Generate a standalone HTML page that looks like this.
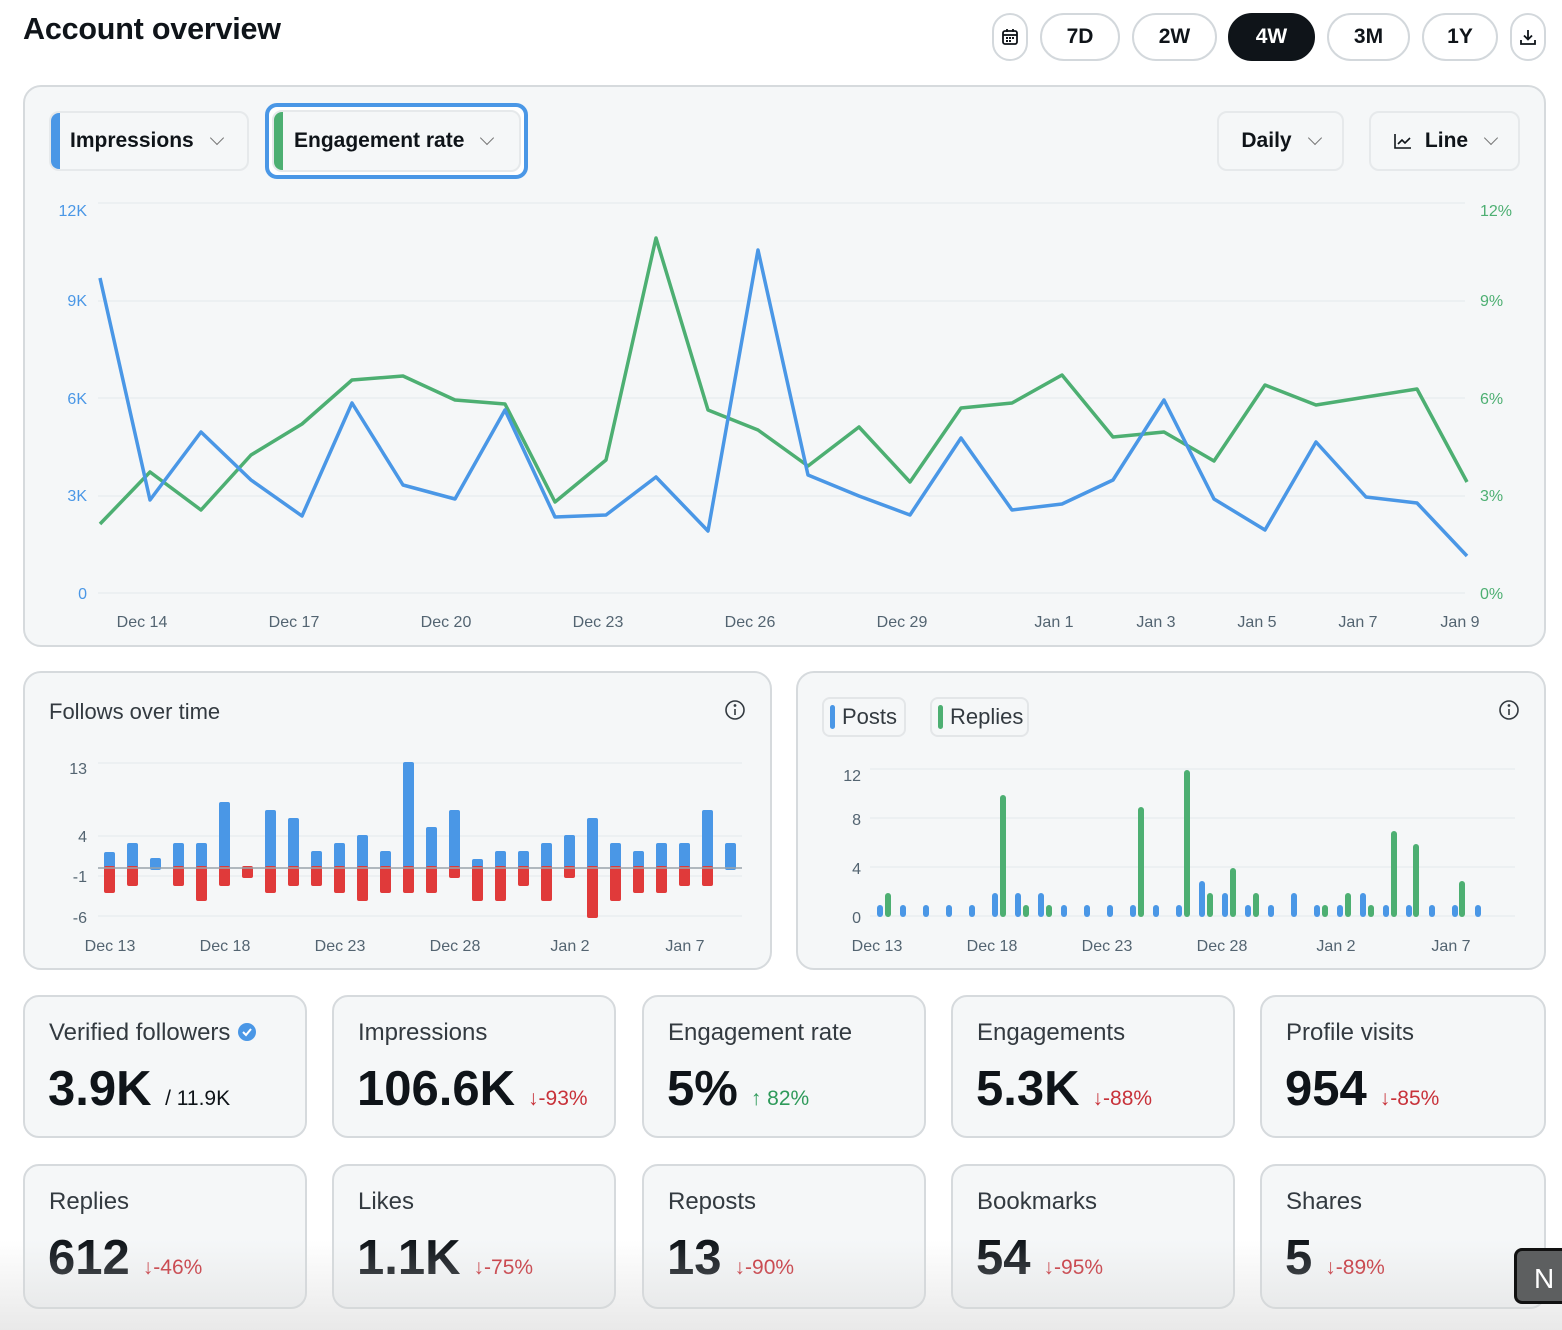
<!DOCTYPE html>
<html><head><meta charset="utf-8"><style>
*{box-sizing:border-box;margin:0;padding:0}
body{width:1562px;height:1330px;overflow:hidden;background:#fff;font-family:"Liberation Sans",sans-serif;color:#0f1419;position:relative}
.abs{position:absolute}
h1{position:absolute;left:23px;top:12px;font-size:30.5px;font-weight:bold;letter-spacing:-0.2px}
.pill{position:absolute;top:13px;height:48px;border:2px solid #d3d8dc;border-radius:24px;font-size:21px;font-weight:bold;display:flex;align-items:center;justify-content:center;background:#fff}
.pill.on{background:#0f1419;color:#fff;border-color:#0f1419}
.card{position:absolute;background:#f5f7f8;border:2px solid #d6dadd;border-radius:18px}
.sel{position:absolute;background:#f5f7f8;border:2px solid #e6e9eb;border-radius:10px;font-size:21px;font-weight:bold;display:flex;align-items:center;overflow:hidden}
.chev{display:inline-block;width:10px;height:10px;border-right:1.6px solid #777;border-bottom:1.6px solid #777;transform:rotate(45deg);margin-left:18px;margin-top:-6px}
.stat{position:absolute;width:284px;height:143px;background:#f5f7f8;border:2px solid #d6dadd;border-radius:16px}
.stat .t{position:absolute;left:24px;top:22px;font-size:24px;color:#333a40}
.stat .v{position:absolute;left:23px;top:64px;font-size:49px;font-weight:bold;letter-spacing:0}
.stat .d{font-size:21px;font-weight:normal;color:#c8323a;letter-spacing:0;margin-left:13px}
.stat .g{color:#2e9a5a}
</style></head><body>
<h1>Account overview</h1>
<div class="pill" style="left:992px;width:36px;border-radius:18px"><svg width="18" height="18" viewBox="0 0 18 18"><rect x="2" y="3" width="14" height="13" rx="2" fill="none" stroke="#0f1419" stroke-width="1.8"/><line x1="2" y1="7" x2="16" y2="7" stroke="#0f1419" stroke-width="1.8"/><line x1="6" y1="1" x2="6" y2="4" stroke="#0f1419" stroke-width="1.8"/><line x1="12" y1="1" x2="12" y2="4" stroke="#0f1419" stroke-width="1.8"/><rect x="5" y="9" width="2" height="2" fill="#0f1419"/><rect x="8" y="9" width="2" height="2" fill="#0f1419"/><rect x="11" y="9" width="2" height="2" fill="#0f1419"/><rect x="5" y="12" width="2" height="2" fill="#0f1419"/><rect x="8" y="12" width="2" height="2" fill="#0f1419"/></svg></div>
<div class="pill" style="left:1040px;width:80px">7D</div>
<div class="pill" style="left:1132px;width:85px">2W</div>
<div class="pill on" style="left:1228px;width:87px">4W</div>
<div class="pill" style="left:1327px;width:83px">3M</div>
<div class="pill" style="left:1422px;width:76px">1Y</div>
<div class="pill" style="left:1510px;width:36px;border-radius:18px"><svg width="18" height="18" viewBox="0 0 18 18" fill="none" stroke="#0f1419" stroke-width="1.8"><path d="M9 2v9M5 7.5l4 4 4-4M2 12v4h14v-4"/></svg></div>

<div class="card" style="left:23px;top:85px;width:1523px;height:562px"></div>
<div class="sel" style="left:49px;top:111px;width:200px;height:60px"><span style="width:9px;height:100%;background:#4a97e6;border-radius:4px 0 0 4px"></span><span style="margin-left:10px">Impressions</span><span class="chev"></span></div>
<div class="abs" style="left:265px;top:103px;width:263px;height:76px;border:4px solid #4a97e6;border-radius:12px;background:#fff"></div>
<div class="sel" style="left:272px;top:110px;width:249px;height:62px"><span style="width:9px;height:100%;background:#4daf72"></span><span style="margin-left:11px">Engagement rate</span><span class="chev"></span></div>
<div class="sel" style="left:1217px;top:111px;width:127px;height:60px;justify-content:center">Daily<span class="chev"></span></div>
<div class="sel" style="left:1369px;top:111px;width:151px;height:60px;justify-content:center"><svg width="20" height="18" viewBox="0 0 20 18" fill="none" stroke="#0f1419" stroke-width="1.6" style="margin-right:12px"><path d="M2 2v14h16M5 12l4-4 3 3 5-5"/></svg>Line<span class="chev"></span></div>

<svg class="abs" style="left:0;top:0" width="1562" height="1330">
<g stroke="#e8ebed" stroke-width="1.2">
<line x1="98" y1="203" x2="1465" y2="203"/><line x1="98" y1="301" x2="1465" y2="301"/><line x1="98" y1="398" x2="1465" y2="398"/><line x1="98" y1="496" x2="1465" y2="496"/><line x1="98" y1="593" x2="1465" y2="593"/>
</g>
<g font-size="16" fill="#4a97e6" text-anchor="end"><text x="87" y="216">12K</text><text x="87" y="306">9K</text><text x="87" y="404">6K</text><text x="87" y="501">3K</text><text x="87" y="599">0</text></g>
<g font-size="16" fill="#4daf72"><text x="1480" y="216">12%</text><text x="1480" y="306">9%</text><text x="1480" y="404">6%</text><text x="1480" y="501">3%</text><text x="1480" y="599">0%</text></g>
<g font-size="16" fill="#536471" text-anchor="middle"><text x="142" y="627">Dec 14</text><text x="294" y="627">Dec 17</text><text x="446" y="627">Dec 20</text><text x="598" y="627">Dec 23</text><text x="750" y="627">Dec 26</text><text x="902" y="627">Dec 29</text><text x="1054" y="627">Jan 1</text><text x="1156" y="627">Jan 3</text><text x="1257" y="627">Jan 5</text><text x="1358" y="627">Jan 7</text><text x="1460" y="627">Jan 9</text></g>
<polyline fill="none" stroke="#4daf72" stroke-width="3.5" stroke-linejoin="round" points="100,524 150,472 201,510 251,455 302,424 352,380 403,376 455,400 505,404 555,502 606,460 656,238 708,410 758,430 808,466 859,427 910,482 961,408 1012,403 1062,375 1113,437 1164,432 1214,461 1265,385 1316,405 1366,397 1417,389 1467,482"/>
<polyline fill="none" stroke="#4a97e6" stroke-width="3.5" stroke-linejoin="round" points="100,278 150,500 201,432 251,480 302,516 352,403 403,485 455,499 505,410 555,517 606,515 656,477 708,531 758,250 808,475 859,496 910,515 961,438 1012,510 1062,504 1113,480 1164,400 1214,499 1265,530 1316,442 1366,497 1417,503 1467,556"/>
</svg>

<div class="card" style="left:23px;top:671px;width:749px;height:299px"></div>
<div class="abs" style="left:49px;top:699px;font-size:22px;color:#333a40">Follows over time</div>
<svg class="abs" style="left:724px;top:699px" width="22" height="22" viewBox="0 0 22 22" fill="none" stroke="#333a40" stroke-width="1.6"><circle cx="11" cy="11" r="9"/><line x1="11" y1="10" x2="11" y2="16"/><circle cx="11" cy="6.5" r="0.6" fill="#333a40"/></svg>
<div class="card" style="left:796px;top:671px;width:750px;height:299px"></div>
<div class="abs" style="left:822px;top:697px;width:84px;height:40px;border:2px solid #e3e6e8;border-radius:8px;font-size:22px;color:#333a40;display:flex;align-items:center"><span style="width:5px;height:24px;background:#4a97e6;border-radius:3px;margin:0 7px 0 6px"></span>Posts</div>
<div class="abs" style="left:930px;top:697px;width:99px;height:40px;border:2px solid #e3e6e8;border-radius:8px;font-size:22px;color:#333a40;display:flex;align-items:center"><span style="width:5px;height:24px;background:#4daf72;border-radius:3px;margin:0 7px 0 6px"></span>Replies</div>
<svg class="abs" style="left:1498px;top:699px" width="22" height="22" viewBox="0 0 22 22" fill="none" stroke="#333a40" stroke-width="1.6"><circle cx="11" cy="11" r="9"/><line x1="11" y1="10" x2="11" y2="16"/><circle cx="11" cy="6.5" r="0.6" fill="#333a40"/></svg>

<svg class="abs" style="left:0;top:0" width="1562" height="1330">
<g stroke="#e8ebed" stroke-width="1.2"><line x1="98" y1="763" x2="742" y2="763"/><line x1="98" y1="836" x2="742" y2="836"/><line x1="98" y1="876" x2="742" y2="876"/><line x1="98" y1="916" x2="742" y2="916"/></g>
<g font-size="16" fill="#536471" text-anchor="end"><text x="87" y="774">13</text><text x="87" y="842">4</text><text x="87" y="882">-1</text><text x="87" y="923">-6</text></g>
<g font-size="16" fill="#536471" text-anchor="middle"><text x="110" y="951">Dec 13</text><text x="225" y="951">Dec 18</text><text x="340" y="951">Dec 23</text><text x="455" y="951">Dec 28</text><text x="570" y="951">Jan 2</text><text x="685" y="951">Jan 7</text></g>
<g fill="#4a97e6">
<rect x="104" y="852" width="11" height="18" rx="2"/><rect x="127" y="843" width="11" height="27" rx="2"/><rect x="150" y="858" width="11" height="12" rx="2"/><rect x="173" y="843" width="11" height="27" rx="2"/><rect x="196" y="843" width="11" height="27" rx="2"/><rect x="219" y="802" width="11" height="68" rx="2"/><rect x="265" y="810" width="11" height="60" rx="2"/><rect x="288" y="818" width="11" height="52" rx="2"/><rect x="311" y="851" width="11" height="19" rx="2"/><rect x="334" y="843" width="11" height="27" rx="2"/><rect x="357" y="835" width="11" height="35" rx="2"/><rect x="380" y="851" width="11" height="19" rx="2"/><rect x="403" y="762" width="11" height="108" rx="2"/><rect x="426" y="827" width="11" height="43" rx="2"/><rect x="449" y="810" width="11" height="60" rx="2"/><rect x="472" y="859" width="11" height="11" rx="2"/><rect x="495" y="851" width="11" height="19" rx="2"/><rect x="518" y="851" width="11" height="19" rx="2"/><rect x="541" y="843" width="11" height="27" rx="2"/><rect x="564" y="835" width="11" height="35" rx="2"/><rect x="587" y="818" width="11" height="52" rx="2"/><rect x="610" y="843" width="11" height="27" rx="2"/><rect x="633" y="851" width="11" height="19" rx="2"/><rect x="656" y="843" width="11" height="27" rx="2"/><rect x="679" y="843" width="11" height="27" rx="2"/><rect x="702" y="810" width="11" height="60" rx="2"/><rect x="725" y="843" width="11" height="27" rx="2"/>
</g>
<g fill="#e03a3a">
<rect x="104" y="866" width="11" height="27" rx="2"/><rect x="127" y="866" width="11" height="20" rx="2"/><rect x="173" y="866" width="11" height="20" rx="2"/><rect x="196" y="866" width="11" height="35" rx="2"/><rect x="219" y="866" width="11" height="20" rx="2"/><rect x="242" y="866" width="11" height="12" rx="2"/><rect x="265" y="866" width="11" height="27" rx="2"/><rect x="288" y="866" width="11" height="20" rx="2"/><rect x="311" y="866" width="11" height="20" rx="2"/><rect x="334" y="866" width="11" height="27" rx="2"/><rect x="357" y="866" width="11" height="35" rx="2"/><rect x="380" y="866" width="11" height="27" rx="2"/><rect x="403" y="866" width="11" height="27" rx="2"/><rect x="426" y="866" width="11" height="27" rx="2"/><rect x="449" y="866" width="11" height="12" rx="2"/><rect x="472" y="866" width="11" height="35" rx="2"/><rect x="495" y="866" width="11" height="35" rx="2"/><rect x="518" y="866" width="11" height="20" rx="2"/><rect x="541" y="866" width="11" height="35" rx="2"/><rect x="564" y="866" width="11" height="12" rx="2"/><rect x="587" y="866" width="11" height="52" rx="2"/><rect x="610" y="866" width="11" height="35" rx="2"/><rect x="633" y="866" width="11" height="27" rx="2"/><rect x="656" y="866" width="11" height="27" rx="2"/><rect x="679" y="866" width="11" height="20" rx="2"/><rect x="702" y="866" width="11" height="20" rx="2"/>
</g>
<line x1="98" y1="868" x2="742" y2="868" stroke="#9aa3aa" stroke-width="1.5"/>

<g stroke="#e8ebed" stroke-width="1.2"><line x1="870" y1="769" x2="1515" y2="769"/><line x1="870" y1="818" x2="1515" y2="818"/><line x1="870" y1="867" x2="1515" y2="867"/><line x1="870" y1="916" x2="1515" y2="916"/></g>
<g font-size="16" fill="#536471" text-anchor="end"><text x="861" y="781">12</text><text x="861" y="825">8</text><text x="861" y="874">4</text><text x="861" y="923">0</text></g>
<g font-size="16" fill="#536471" text-anchor="middle"><text x="877" y="951">Dec 13</text><text x="992" y="951">Dec 18</text><text x="1107" y="951">Dec 23</text><text x="1222" y="951">Dec 28</text><text x="1336" y="951">Jan 2</text><text x="1451" y="951">Jan 7</text></g>
<g fill="#4a97e6">
<rect x="877" y="905" width="6" height="12" rx="3"/><rect x="900" y="905" width="6" height="12" rx="3"/><rect x="923" y="905" width="6" height="12" rx="3"/><rect x="946" y="905" width="6" height="12" rx="3"/><rect x="969" y="905" width="6" height="12" rx="3"/><rect x="992" y="893" width="6" height="24" rx="3"/><rect x="1015" y="893" width="6" height="24" rx="3"/><rect x="1038" y="893" width="6" height="24" rx="3"/><rect x="1061" y="905" width="6" height="12" rx="3"/><rect x="1084" y="905" width="6" height="12" rx="3"/><rect x="1107" y="905" width="6" height="12" rx="3"/><rect x="1130" y="905" width="6" height="12" rx="3"/><rect x="1153" y="905" width="6" height="12" rx="3"/><rect x="1176" y="905" width="6" height="12" rx="3"/><rect x="1199" y="881" width="6" height="36" rx="3"/><rect x="1222" y="893" width="6" height="24" rx="3"/><rect x="1245" y="905" width="6" height="12" rx="3"/><rect x="1268" y="905" width="6" height="12" rx="3"/><rect x="1291" y="893" width="6" height="24" rx="3"/><rect x="1314" y="905" width="6" height="12" rx="3"/><rect x="1337" y="905" width="6" height="12" rx="3"/><rect x="1360" y="893" width="6" height="24" rx="3"/><rect x="1383" y="905" width="6" height="12" rx="3"/><rect x="1406" y="905" width="6" height="12" rx="3"/><rect x="1429" y="905" width="6" height="12" rx="3"/><rect x="1452" y="905" width="6" height="12" rx="3"/><rect x="1475" y="905" width="6" height="12" rx="3"/>
</g>
<g fill="#4daf72">
<rect x="885" y="893" width="6" height="24" rx="3"/><rect x="1000" y="795" width="6" height="122" rx="3"/><rect x="1023" y="905" width="6" height="12" rx="3"/><rect x="1046" y="905" width="6" height="12" rx="3"/><rect x="1138" y="807" width="6" height="110" rx="3"/><rect x="1184" y="770" width="6" height="147" rx="3"/><rect x="1207" y="893" width="6" height="24" rx="3"/><rect x="1230" y="868" width="6" height="49" rx="3"/><rect x="1253" y="893" width="6" height="24" rx="3"/><rect x="1322" y="905" width="6" height="12" rx="3"/><rect x="1345" y="893" width="6" height="24" rx="3"/><rect x="1368" y="905" width="6" height="12" rx="3"/><rect x="1391" y="831" width="6" height="86" rx="3"/><rect x="1413" y="844" width="6" height="73" rx="3"/><rect x="1459" y="881" width="6" height="36" rx="3"/>
</g>
</svg>

<div class="stat" style="left:23px;top:995px"><div class="t">Verified followers <svg width="20" height="20" viewBox="0 0 20 20" style="vertical-align:-2px"><circle cx="10" cy="10" r="9" fill="#4a97e6"/><path d="M6 10l3 3 5-6" fill="none" stroke="#fff" stroke-width="2"/></svg></div><div class="v">3.9K <span style="font-size:21px;font-weight:normal;letter-spacing:0">/ 11.9K</span></div></div>
<div class="stat" style="left:332px;top:995px"><div class="t">Impressions</div><div class="v">106.6K<span class="d">↓-93%</span></div></div>
<div class="stat" style="left:642px;top:995px"><div class="t">Engagement rate</div><div class="v">5%<span class="d g">↑ 82%</span></div></div>
<div class="stat" style="left:951px;top:995px"><div class="t">Engagements</div><div class="v">5.3K<span class="d">↓-88%</span></div></div>
<div class="stat" style="left:1260px;top:995px;width:286px"><div class="t">Profile visits</div><div class="v">954<span class="d">↓-85%</span></div></div>
<div class="stat" style="left:23px;top:1164px;height:145px"><div class="t">Replies</div><div class="v">612<span class="d">↓-46%</span></div></div>
<div class="stat" style="left:332px;top:1164px;height:145px"><div class="t">Likes</div><div class="v">1.1K<span class="d">↓-75%</span></div></div>
<div class="stat" style="left:642px;top:1164px;height:145px"><div class="t">Reposts</div><div class="v">13<span class="d">↓-90%</span></div></div>
<div class="stat" style="left:951px;top:1164px;height:145px"><div class="t">Bookmarks</div><div class="v">54<span class="d">↓-95%</span></div></div>
<div class="stat" style="left:1260px;top:1164px;width:286px;height:145px"><div class="t">Shares</div><div class="v">5<span class="d">↓-89%</span></div></div>
<div class="abs" style="left:0;top:1240px;width:1562px;height:90px;background:linear-gradient(rgba(220,220,220,0),rgba(215,215,215,0.55))"></div>
<div class="abs" style="left:1514px;top:1248px;width:60px;height:56px;background:#5d5f60;border:3px solid #111;border-radius:8px;color:#fff;font-size:28px;padding:12px 0 0 17px">N</div>
</body></html>
